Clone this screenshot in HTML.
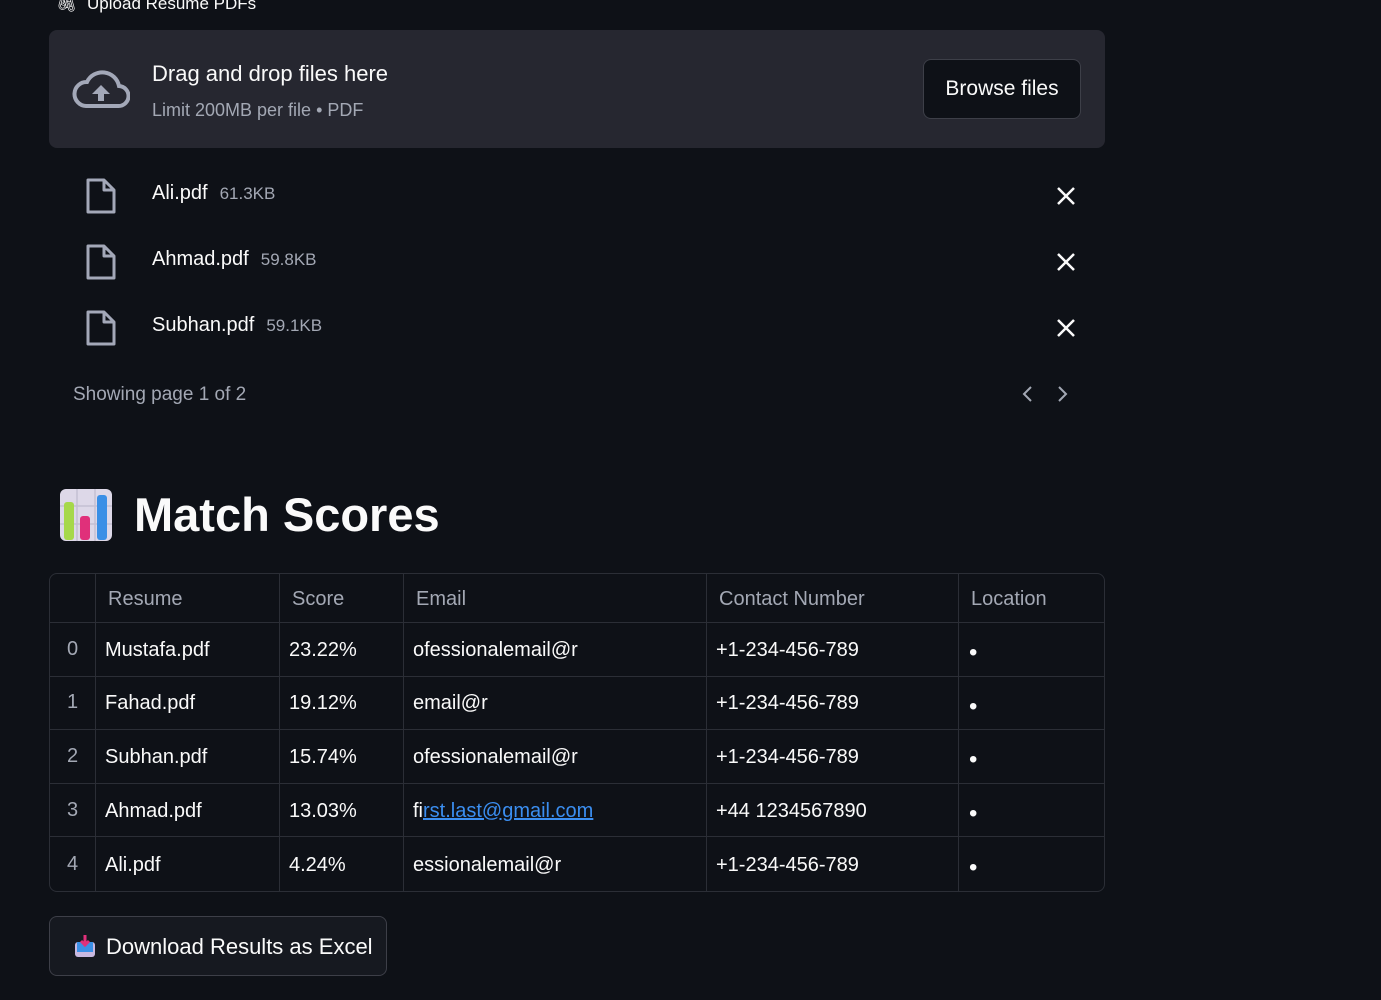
<!DOCTYPE html>
<html><head><style>
*{box-sizing:border-box;margin:0;padding:0}
body{width:1381px;height:1000px;background:#0e1117;color:#fafafa;font-family:"Liberation Sans",sans-serif;position:relative;overflow:hidden}
.abs{position:absolute}
.drop{left:49px;top:30px;width:1056px;height:118px;background:#262730;border-radius:8px}
.btn{left:923px;top:59px;width:158px;height:60px;border:1px solid #3d3f48;border-radius:8px;background:#0e1117;font-size:21px;display:flex;align-items:center;justify-content:center}
.fname{font-size:20px;color:#fafafa}
.fsize{font-size:17px;color:#a3a8b4;margin-left:12px}
table{position:absolute;left:49px;top:573px;width:1056px;border-collapse:separate;border-spacing:0;border:1px solid #2b2e36;border-radius:8px;font-size:20px}
td,th{border-right:1px solid #2b2e36;border-bottom:1px solid #2b2e36;padding:0 9px;text-align:left;font-weight:normal;white-space:nowrap;overflow:hidden}
th{height:49px;color:#a3a8b4;padding-left:12px;padding-top:2px}
td{height:53.6px;padding-top:2px}
tr:last-child td{border-bottom:none}
td:last-child,th:last-child{border-right:none}
td.i{color:#a3a8b4;text-align:center;padding:0}
td.b{font-size:24px;padding-top:8px;padding-left:10px}
</style></head><body>
<div class="abs" style="left:56px;top:-6px;font-size:17px;color:#fafafa">🖇&nbsp; Upload Resume PDFs</div>
<div class="abs drop"></div>
<svg class="abs" style="left:72px;top:68px" width="58" height="42" viewBox="0 0 58 42"><path d="M14 38h32a10 10 0 0 0 1-20A17 17 0 0 0 15 14 12 12 0 0 0 14 38z" fill="none" stroke="#a3a8b8" stroke-width="4"/><path d="M29 17l-9 9h6v7h6v-7h6z" fill="#a3a8b8"/></svg>
<div class="abs" style="left:152px;top:61px;font-size:22px">Drag and drop files here</div>
<div class="abs" style="left:152px;top:100px;font-size:18px;color:#a3a8b4">Limit 200MB per file • PDF</div>
<div class="abs btn">Browse files</div>

<svg class="abs" style="left:85px;top:178px" width="32" height="36" viewBox="0 0 32 36"><path d="M3 2h16l10 10v22H3z M19 2v10h10" fill="none" stroke="#a3a8b8" stroke-width="3" stroke-linejoin="round"/></svg>
<div class="abs" style="left:152px;top:182px"><span class="fname">Ali.pdf</span><span class="fsize">61.3KB</span></div>
<svg class="abs" style="left:85px;top:244px" width="32" height="36" viewBox="0 0 32 36"><path d="M3 2h16l10 10v22H3z M19 2v10h10" fill="none" stroke="#a3a8b8" stroke-width="3" stroke-linejoin="round"/></svg>
<div class="abs" style="left:152px;top:248px"><span class="fname">Ahmad.pdf</span><span class="fsize">59.8KB</span></div>
<svg class="abs" style="left:85px;top:310px" width="32" height="36" viewBox="0 0 32 36"><path d="M3 2h16l10 10v22H3z M19 2v10h10" fill="none" stroke="#a3a8b8" stroke-width="3" stroke-linejoin="round"/></svg>
<div class="abs" style="left:152px;top:314px"><span class="fname">Subhan.pdf</span><span class="fsize">59.1KB</span></div>
<svg class="abs" style="left:1056px;top:186px" width="20" height="20"><path d="M2 2L18 18M18 2L2 18" stroke="#fafafa" stroke-width="2.5"/></svg>
<svg class="abs" style="left:1056px;top:252px" width="20" height="20"><path d="M2 2L18 18M18 2L2 18" stroke="#fafafa" stroke-width="2.5"/></svg>
<svg class="abs" style="left:1056px;top:318px" width="20" height="20"><path d="M2 2L18 18M18 2L2 18" stroke="#fafafa" stroke-width="2.5"/></svg>
<div class="abs" style="left:73px;top:384px;font-size:19px;color:#a3a8b4">Showing page 1 of 2</div>
<svg class="abs" style="left:1018px;top:384px" width="60" height="20"><path d="M13 3l-7 7 7 7M41 3l7 7-7 7" fill="none" stroke="#a3a8b4" stroke-width="2"/></svg>

<svg class="abs" style="left:59px;top:488px" width="54" height="54" viewBox="0 0 54 54"><rect x="1" y="1" width="52" height="52" rx="6" fill="#ddd8e8"/><path d="M18 1v52M36 1v52M1 18h52M1 36h52" stroke="#c4bfd2" stroke-width="1.5"/><rect x="5" y="14" width="10" height="38" rx="3" fill="#a6d84a"/><rect x="21" y="28" width="10" height="24" rx="3" fill="#e0307a"/><rect x="38" y="7" width="10" height="45" rx="3" fill="#3a8fe6"/></svg>
<div class="abs" style="left:134px;top:487px;font-size:47px;font-weight:bold;letter-spacing:0">Match Scores</div>

<table>
<tr><th style="width:46px"></th><th style="width:184px">Resume</th><th style="width:124px">Score</th><th style="width:303px">Email</th><th style="width:252px">Contact Number</th><th>Location</th></tr>
<tr><td class="i">0</td><td>Mustafa.pdf</td><td>23.22%</td><td>ofessionalemail@r</td><td>+1-234-456-789</td><td class="b">•</td></tr>
<tr><td class="i">1</td><td>Fahad.pdf</td><td>19.12%</td><td>email@r</td><td>+1-234-456-789</td><td class="b">•</td></tr>
<tr><td class="i">2</td><td>Subhan.pdf</td><td>15.74%</td><td>ofessionalemail@r</td><td>+1-234-456-789</td><td class="b">•</td></tr>
<tr><td class="i">3</td><td>Ahmad.pdf</td><td>13.03%</td><td>fi<span style="color:#3b8ef0;text-decoration:underline">rst.last@gmail.com</span></td><td>+44 1234567890</td><td class="b">•</td></tr>
<tr><td class="i">4</td><td>Ali.pdf</td><td>4.24%</td><td>essionalemail@r</td><td>+1-234-456-789</td><td class="b">•</td></tr>
</table>

<div class="abs" style="left:49px;top:916px;width:338px;height:60px;border:1px solid #3d3f48;border-radius:8px;background:#161920"></div>
<svg class="abs" style="left:74px;top:934px" width="22" height="24" viewBox="0 0 22 24"><rect x="1" y="8" width="20" height="15" rx="3" fill="#c8b8e0"/><rect x="3" y="8" width="16" height="10" fill="#3a8fe6"/><path d="M11 1v10M7 7l4 4 4-4" stroke="#e0307a" stroke-width="3" fill="none"/></svg>
<div class="abs" style="left:106px;top:934px;font-size:22px">Download Results as Excel</div>
</body></html>
